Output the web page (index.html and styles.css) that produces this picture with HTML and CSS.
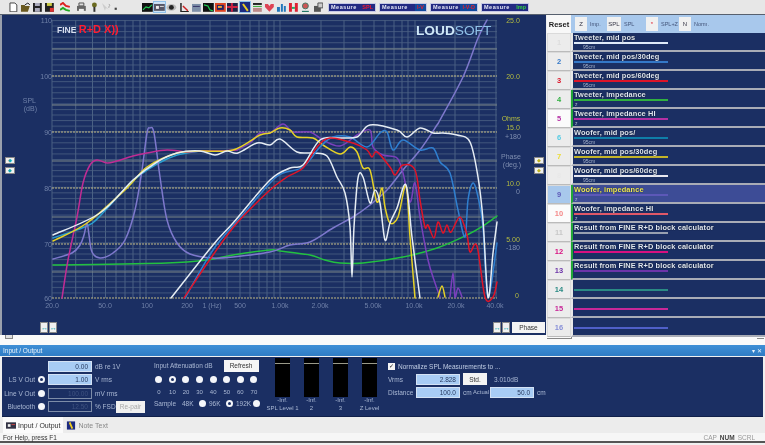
FILE: index.html
```html
<!DOCTYPE html>
<html lang="en">
<head>
<meta charset="utf-8">
<title>FINE R+D X</title>
<link rel="stylesheet" href="styles.css">
</head>
<body>
<header class="toolbar">
  <div class="tools tools-a">
    <svg class="ico" viewBox="0 0 11 11"><path d="M2 1h5l2 2v7H2z" fill="#fff" stroke="#444"/></svg>
    <svg class="ico" viewBox="0 0 11 11"><path d="M1 3h4v1h5l-2 6H1z" fill="#6a5a20"/><path d="M5 3l3-2 2 2" fill="none" stroke="#222"/></svg>
    <svg class="ico" viewBox="0 0 11 11"><path d="M1 1h9v9H1z" fill="#222"/><path d="M3 1h5v3H3zM3 6h5v4H3z" fill="#aab"/></svg>
    <svg class="ico" viewBox="0 0 11 11"><path d="M1 1h9v9H1z" fill="#222"/><path d="M3 1h5v3H3z" fill="#cc4"/><path d="M6 6h4v4H6z" fill="#d33"/></svg>
    <svg class="ico ico-gap" viewBox="0 0 11 11"><path d="M0 3l3-2 3 3 4 1" fill="none" stroke="#d22" stroke-width="2"/><path d="M0 8l3-2 3 2 4 1" fill="none" stroke="#2a2" stroke-width="2"/></svg>
    <svg class="ico ico-gap" viewBox="0 0 11 11"><path d="M3 1h5v3H3z" fill="#ddd" stroke="#555"/><path d="M1 4h9v5H1z" fill="#666"/><path d="M3 7h5v3H3z" fill="#eee"/></svg>
    <svg class="ico" viewBox="0 0 11 11"><circle cx="5.500" cy="3" r="2.500" fill="#6a6a20"/><path d="M5.500 5v5" stroke="#333" stroke-width="2"/></svg>
    <svg class="ico" viewBox="0 0 11 11"><path d="M1 1l3 8 1-3 3 2z" fill="#ccc"/><path d="M8 2q2 1 0 3v1" fill="none" stroke="#aaa"/></svg>
    <svg class="ico ico-tiny" viewBox="0 0 11 11"><path d="M3 6h4v4H3z" fill="#444"/></svg>
  </div>
  <div class="tools tools-b">
    <svg class="ico" viewBox="0 0 11 11"><path d="M0 1h11v9H0z" fill="#111"/><path d="M1 8l3-3 3 1 3-3" fill="none" stroke="#2c5" stroke-width="1.200"/></svg>
    <span class="ico-on"><svg class="ico" viewBox="0 0 11 11"><path d="M0 2h11v7H0z" fill="#556"/><path d="M2 4h3v3H2z" fill="#eee"/><path d="M6 4h4v1H6z" fill="#ddd"/></svg></span>
    <svg class="ico" viewBox="0 0 11 11"><ellipse cx="5.500" cy="5.500" rx="5" ry="3.500" fill="#bbb"/><circle cx="5.500" cy="5.500" r="2.500" fill="#222"/></svg>
    <svg class="ico" viewBox="0 0 11 11"><path d="M2 1v9h8" fill="none" stroke="#222" stroke-width="1.500"/><path d="M4 4l5 5" stroke="#c22" stroke-width="1.500"/></svg>
    <svg class="ico" viewBox="0 0 11 11"><path d="M1 2h9v8H1z" fill="#7e8fa8"/><path d="M2 4h7v1H2z" fill="#336"/></svg>
    <svg class="ico" viewBox="0 0 11 11"><path d="M0 1h11v9H0z" fill="#111"/><path d="M1 3l4 1 2 4 3 1" fill="none" stroke="#2c5" stroke-width="1.200"/></svg>
    <svg class="ico" viewBox="0 0 11 11"><path d="M0 1h11v9H0z" fill="#d42"/><path d="M2 3h7v5H2z" fill="#226"/><path d="M3 4h4v2H3z" fill="#ea3"/></svg>
    <svg class="ico" viewBox="0 0 11 11"><path d="M0 1h11v9H0z" fill="#224"/><path d="M5 1v9M0 5h11" stroke="#c24" stroke-width="2"/></svg>
    <span class="ico-on"><svg class="ico" viewBox="0 0 11 11"><path d="M0 0h11v11H0z" fill="#1c2a80"/><path d="M3 2l5 7" stroke="#ec2" stroke-width="2"/></svg></span>
    <svg class="ico" viewBox="0 0 11 11"><path d="M1 1h9v2H1z" fill="#222"/><path d="M1 4h9v1H1z" fill="#3a3"/><path d="M1 6h9v4H1z" fill="#b88"/></svg>
    <svg class="ico" viewBox="0 0 11 11"><path d="M5.500 10L1 5V2h3l1.500 2L7 2h3v3z" fill="#d45"/></svg>
    <svg class="ico" viewBox="0 0 11 11"><path d="M1 5h3v5H1zM5 2h2v8H5zM8 4h2v6H8z" fill="#27b"/></svg>
    <svg class="ico" viewBox="0 0 11 11"><path d="M1 1h3v9H1zM7 1h3v9H7z" fill="#d23"/><path d="M4 5h3v2H4z" fill="#2a6"/></svg>
    <svg class="ico" viewBox="0 0 11 11"><circle cx="5.500" cy="4" r="3" fill="#c55" stroke="#476"/><path d="M2 10h7" stroke="#276" stroke-width="2"/></svg>
    <svg class="ico" viewBox="0 0 11 11"><path d="M1 4h7v6H1z" fill="#555"/><path d="M5 1h5v5H5z" fill="#ccc" stroke="#555"/></svg>
  </div>
  <div class="measures">
    <span class="measure">Measure<b class="m-red">SPL</b></span>
    <span class="measure">Measure<b class="m-box">I-V</b></span>
    <span class="measure">Measure<b class="m-box">I-V-D</b></span>
    <span class="measure">Measure<b class="m-green">Imp</b></span>
  </div>
</header>

<main class="main">
  <section class="chart">
    <svg class="plot" viewBox="0 15 545 320" width="545" height="320">
      <defs>
        <pattern id="minor" x="0" y="20" width="10" height="5.560" patternUnits="userSpaceOnUse">
          <rect width="10" height="1" fill="#41567c"/>
        </pattern>
      </defs>
      <rect class="grid-h" x="52" y="20" width="445" height="278" fill="url(#minor)"/>
      <path class="grid-v" d="M52 20V298M75.700 20V298M92.500 20V298M105.500 20V298M116 20V298M125 20V298M133 20V298M140 20V298M146 20V298M186 20V298M210 20V298M227 20V298M240 20V298M250 20V298M259 20V298M267 20V298M274 20V298M280 20V298M321 20V298M344 20V298M361 20V298M374 20V298M385 20V298M394 20V298M402 20V298M408 20V298M415 20V298M455 20V298M479 20V298M496 20V298"/>
      <path class="grid-5" d="M52 49H497M52 105H497M52 161H497M52 217H497M52 272H497"/>
      <path class="grid-10" d="M52 76H497M52 132H497M52 188H497M52 244H497M52 298H497"/>

      <polyline class="curve" points="53,238 87,226 100,216 133,181 157,164 177,155 200,151"/>
      <polyline class="curve c-green" points="53,265 167,263 207,260 233,255 270,250 280,251 310,255 325,260 340,263 363,263 403,257 437,248 467,235 483,226 497,216"/>
      <polyline class="curve c-lav" points="53,259 72,253 80,245 84,235 87,223 89,235 92,252 100,258 113,253 125,240 135,210 142,170 147,133 150,128 154,133 160,177 167,220 177,243 190,254 213,258 233,257 270,252 290,245 310,242 333,228 353,217 370,205 387,190 403,170 420,150 437,125 440,120 463,77 478,38 487,20"/>
      <polyline class="curve c-mag" points="62,298 68,260 77,217 83,183 90,165 97,160 107,163 117,161 133,156 147,153 167,150 187,152 200,151 220,151 237,150"/>
      <polyline class="curve c-pur" points="237,150 250,143 260,133 270,133 283,124 293,132 310,132 323,140 340,146 357,135 370,130 373,147 383,155 397,158 403,173 410,202 415,183 420,217 428,260 435,283 440,297"/>
      <polyline class="curve c-pur" points="450,297 453,273 455,297 458,288 462,297"/>
      <polyline class="curve c-yel" points="53,241 87,223 127,188 147,167 177,153 200,151 233,150 260,135 270,133 280,128 290,130 297,137 313,138 323,145 340,154 350,147 357,152 363,168 370,170 377,202 382,188 385,207 390,223 398,217 406,186 410,237 415,298"/>
      <polyline class="curve c-yel" points="438,297 442,286 445,297"/>
      <polyline class="curve c-whi" points="53,235 100,213 133,180 157,162 177,153 200,151 215,155 227,151 238,153 257,143 270,145 280,139 297,152 313,153 327,156 337,177 345,193 350,227 352,277 354,227 358,178 363,177 370,203 375,190 380,203 385,240 390,223 397,208 406,185 412,237 420,298"/>
      <polyline class="curve c-blu" points="185,298 213,250 240,218 270,183 283,173 303,167 320,147 333,137 350,137 367,147 380,133 387,132 393,150 403,140 420,150 433,148 440,162 450,173 458,210 465,237 468,200 473,183 478,197 483,227 488,297 497,243"/>
      <polyline class="curve c-whi" points="171,298 213,245 233,223 270,180 290,168 303,165 320,140 340,138 357,137 370,125 397,130 407,137 420,128 433,133 443,133 457,135 470,142 478,177 483,220 488,297 493,253 497,222"/>
      <polyline class="curve c-red" points="184,298 213,255 237,223 270,190 287,177 303,168 317,147 330,138 353,143 367,150 372,157 377,152 390,167 395,175 403,165 415,170 420,200 425,227 428,225 434,238 438,222 443,233 447,225 451,232 460,217 467,235 470,252 477,246 485,297 493,297 497,282"/>

      <text class="logo-fine" x="57" y="33">FINE <tspan class="logo-rd">R+D X))</tspan></text>
      <text class="logo-soft" x="416" y="35"><tspan class="logo-loud">LOUD</tspan>SOFT</text>

      <g class="ax-l">
        <text x="52" y="23">110</text><text x="52" y="79">100</text><text x="36" y="103">SPL</text><text x="37" y="111">(dB)</text><text x="52" y="135">90</text><text x="52" y="191">80</text><text x="52" y="247">70</text><text x="52" y="301">60</text>
      </g>
      <g class="ax-b">
        <text x="52" y="308">20.0</text><text x="105" y="308">50.0</text><text x="147" y="308">100</text><text x="187" y="308">200</text><text x="212" y="308">1 (Hz)</text><text x="240" y="308">500</text><text x="280" y="308">1.00k</text><text x="320" y="308">2.00k</text><text x="373" y="308">5.00k</text><text x="414" y="308">10.0k</text><text x="456" y="308">20.0k</text><text x="495" y="308">40.0k</text>
      </g>
      <g class="ax-r">
        <text x="513" y="23">25.0</text><text x="513" y="79">20.0</text><text x="511" y="121">Ohms</text><text x="513" y="130">15.0</text><text class="gray" x="513" y="139">+180</text><text class="gray" x="511" y="159">Phase</text><text class="gray" x="512" y="167">(deg.)</text><text x="513" y="186">10.0</text><text class="gray" x="518" y="194">0</text><text x="513" y="242">5.00</text><text class="gray" x="513" y="250">-180</text><text x="517" y="298">0</text>
      </g>
    </svg>
    <button class="nudge n-l1">&#9670;</button>
    <button class="nudge n-l2">&#9670;</button>
    <button class="nudge n-r1 yel">&#9670;</button>
    <button class="nudge n-r2 yel">&#9670;</button>
    <button class="nudge tall n-b1">&#8596;</button>
    <button class="nudge tall n-b2">&#8596;</button>
    <button class="nudge tall n-b3">&#8596;</button>
    <button class="nudge tall n-b4">&#8596;</button>
    <button class="phase">Phase</button>
  </section>

  <aside class="side">
    <div class="side-head">
      <button class="reset">Reset</button>
      <div class="modes">
        <button class="mode m-z">Z</button><span class="mode-l l-z">Imp.</span>
        <button class="mode m-spl">SPL</button><span class="mode-l l-spl">SPL</span>
        <button class="mode m-star">*</button><span class="mode-l l-star">SPL+Z</span>
        <button class="mode m-n">N</button><span class="mode-l">Norm.</span>
      </div>
    </div>
    <ol class="rows">
      <li class="row r1"><span class="num">1</span><div class="trace"><b>Tweeter, mid pos</b><i></i><small>95cm</small></div></li>
      <li class="row r2"><span class="num">2</span><div class="trace"><b>Tweeter, mid pos/30deg</b><i></i><small>95cm</small></div></li>
      <li class="row r3"><span class="num">3</span><div class="trace"><b>Tweeter, mid pos/60deg</b><i></i><small>95cm</small></div></li>
      <li class="row r4 act"><span class="num">4</span><div class="trace"><b>Tweeter, impedance</b><i></i><small class="z">z</small></div></li>
      <li class="row r5 act lit"><span class="num">5</span><div class="trace"><b>Tweeter, impedance HI</b><i></i><small class="z">z</small></div></li>
      <li class="row r6"><span class="num">6</span><div class="trace"><b>Woofer, mid pos/</b><i></i><small>95cm</small></div></li>
      <li class="row r7"><span class="num">7</span><div class="trace"><b>Woofer, mid pos/30deg</b><i></i><small>95cm</small></div></li>
      <li class="row r8"><span class="num">8</span><div class="trace"><b>Woofer, mid pos/60deg</b><i></i><small>95cm</small></div></li>
      <li class="row r9 act sel"><span class="num">9</span><div class="trace"><b>Woofer, impedance</b><i></i><small class="z">z</small></div></li>
      <li class="row r10 act lit"><span class="num">10</span><div class="trace"><b>Woofer, impedance HI</b><i></i><small class="z">z</small></div></li>
      <li class="row r11 act"><span class="num">11</span><div class="trace"><b>Result from FINE R+D block calculator</b><i></i></div></li>
      <li class="row r12 act"><span class="num">12</span><div class="trace"><b>Result from FINE R+D block calculator</b><i></i></div></li>
      <li class="row r13 act"><span class="num">13</span><div class="trace"><b>Result from FINE R+D block calculator</b><i></i></div></li>
      <li class="row r14"><span class="num">14</span><div class="trace"><b>&nbsp;</b><i></i></div></li>
      <li class="row r15"><span class="num">15</span><div class="trace"><b>&nbsp;</b><i></i></div></li>
      <li class="row r16"><span class="num">16</span><div class="trace"><b>&nbsp;</b><i></i></div></li>
    </ol>
  </aside>
</main>

<div class="strip"><span class="grip"></span><span class="grip-b"></span><span class="grip-c"></span></div>

<div class="title-bar"><span>Input / Output</span><span class="title-ctl">&#9662; &#10005;</span></div>

<section class="io">
  <div class="io-a">
    <span></span><span></span><span class="field">0.00</span><span class="unit u-wide">dB re 1V</span>
    <span class="lbl">LS V Out</span><span class="radio on"></span><span class="field">1.00</span><span class="unit u-wide">V rms</span>
    <span class="lbl">Line V Out</span><span class="radio"></span><span class="field off">100.00</span><span class="unit u-wide">mV rms</span>
    <span class="lbl">Bluetooth</span><span class="radio"></span><span class="field off">12.50</span><span class="unit">% FSD</span><button class="repair">Re-pair</button>
  </div>
  <div class="io-b">
    <div class="att-head"><span>Input Attenuation dB</span><button class="refresh">Refresh</button></div>
    <div class="att att-r">
      <span class="radio"></span><span class="radio on"></span><span class="radio"></span><span class="radio"></span><span class="radio"></span><span class="radio"></span><span class="radio"></span><span class="radio"></span>
    </div>
    <div class="att att-n"><span>0</span><span>10</span><span>20</span><span>30</span><span>40</span><span>50</span><span>60</span><span>70</span></div>
    <div class="sample"><span class="s-l">Sample</span><span class="s-k">48K</span><span class="radio"></span><span class="s-k">96K</span><span class="radio on"></span><span class="s-k">192K</span><span class="radio"></span></div>
  </div>
  <div class="io-c">
    <div class="meter"><div class="bar"></div><span>-Inf.</span><span>SPL Level 1</span></div>
    <div class="meter"><div class="bar"></div><span>-Inf.</span><span>2</span></div>
    <div class="meter"><div class="bar"></div><span>-Inf.</span><span>3</span></div>
    <div class="meter"><div class="bar"></div><span>-Inf.</span><span>Z Level</span></div>
  </div>
  <div class="io-d">
    <div class="norm"><span class="check">&#10003;</span><span>Normalize SPL Measurements to ...</span></div>
    <div class="norm-row"><span class="n-l">Vrms</span><span class="field wide">2.828</span><button class="std">Std.</button><span class="db">3.010dB</span></div>
    <div class="norm-row"><span class="n-l">Distance</span><span class="field wide">100.0</span><span class="cm">cm</span><span class="act-l">Actual</span><span class="field wide">50.0</span><span class="cm2">cm</span></div>
  </div>
</section>

<nav class="tabs">
  <span class="tab cur"><svg class="tab-ico" viewBox="0 0 11 9"><path d="M0 1h11v7H0z" fill="#334"/><path d="M2 3h3v3H2z" fill="#eee"/><path d="M6 3h4v1H6z" fill="#c44"/></svg>Input / Output</span>
  <span class="tab"><svg class="tab-ico" viewBox="0 0 11 9"><path d="M1 0h9v9H1z" fill="#1c2a80"/><path d="M4 1l3 7" stroke="#ec2" stroke-width="2"/></svg>Note Text</span>
</nav>

<footer class="status"><span>For Help, press F1</span><span class="locks"><span>CAP</span><b>NUM</b><span>SCRL</span></span></footer>
<script src="chart.js"></script>
</body>
</html>
```
FILE: styles.css
```css
* { box-sizing: border-box; }
html, body { margin: 0; padding: 0; }
body {
  width: 765px; height: 445px; overflow: hidden;
  background: #f0f0f0; color: #222;
  font: 7px "Liberation Sans", Arial, sans-serif;
  filter: blur(.5px);
}
button { font: inherit; padding: 0; margin: 0; border: 0; cursor: default; }

/* toolbar */
.toolbar { height: 15px; display: flex; align-items: center; background: #e7e7e7; border-bottom: 1px solid #57606e; }
.tools { display: flex; align-items: center; gap: 1.300px; }
.tools-a { margin-left: 8px; width: 128px; }
.tools-b { margin-left: 6px; width: 186px; gap: 1.400px; }
.ico { width: 10.800px; height: 10.800px; display: block; flex: none; }
.ico-gap { margin-left: 4px; }
.ico-tiny { width: 6px; }
.ico-on { outline: 1px solid #8fc0ea; background: #cfe4f7; display: block; }
.measures { display: flex; gap: 3px; }
.measure { width: 48px; height: 9px; background: #222a82; border: 1px solid #c4c8e4; color: #e6e8f6; font-size: 5.500px; font-weight: 700; letter-spacing: .5px; line-height: 7px; padding-left: 2px; white-space: nowrap; display: flex; justify-content: space-between; }
.measure b { padding: 0 2px; letter-spacing: 0; }
.m-red { color: #f01830; }
.m-box { color: #e02030; background: #104a9c; }
.m-green { color: #30d040; }

/* main */
.main { height: 320px; display: flex; }
.chart { width: 546px; position: relative; background: #1b2f63; border-left: 2px solid #9aa0ac; overflow: hidden; }
.plot { display: block; margin-left: -2px; }
.grid-v { stroke: #4a6184; stroke-width: 1; fill: none; }
.grid-5 { stroke: #7a8688; stroke-width: 1; fill: none; }
.grid-10 { stroke: #c0b884; stroke-width: 1; stroke-dasharray: 2 1; fill: none; }
.curve { fill: none; stroke: #2a9fd0; stroke-width: 1.500; stroke-linejoin: round; stroke-linecap: round; }
.c-green { stroke: #22c040; }
.c-lav { stroke: #7d78cc; }
.c-mag { stroke: #c02c94; }
.c-pur { stroke: #7a40bc; }
.c-yel { stroke: #e6d226; }
.c-whi { stroke: #e6edf4; }
.c-blu { stroke: #2f7fd0; }
.c-red { stroke: #e01428; }
.logo-fine { font: 700 8.500px "Liberation Sans", Arial, sans-serif; fill: #d8dff0; }
.logo-rd { fill: #ff1c30; font-size: 11px; }
.logo-soft { font: 400 13.700px "Liberation Sans", Arial, sans-serif; fill: #8fc0e8; }
.logo-loud { font-weight: 700; fill: #cfe8f8; }
.ax-l text, .ax-b text { font-size: 7px; fill: #6f80a8; }
.ax-l text { text-anchor: end; }
.ax-b text { text-anchor: middle; }
.ax-r text { font-size: 7px; fill: #b4bc40; text-anchor: middle; }
.ax-r .gray { fill: #7f8eb0; }

.nudge { position: absolute; width: 10px; height: 7px; background: #f0f0f0; color: #18a8b0; border: 1px solid #888; font-size: 5px; line-height: 5px; text-align: center; }
.nudge.yel { color: #c0b420; }
.nudge.tall { width: 8px; height: 11px; line-height: 9px; font-size: 7px; }
.n-l1 { left: 3px; top: 142px; }
.n-l2 { left: 3px; top: 152px; }
.n-r1 { left: 532px; top: 142px; }
.n-r2 { left: 532px; top: 152px; }
.n-b1 { left: 38px; top: 307px; }
.n-b2 { left: 47px; top: 307px; }
.n-b3 { left: 491px; top: 307px; }
.n-b4 { left: 500px; top: 307px; }
.phase { position: absolute; left: 510px; top: 307px; width: 33px; height: 11px; background: #f4f4f4; color: #333; font-size: 6.500px; }

/* side panel */
.side { flex: 1; display: flex; flex-direction: column; background: #f0f0f0; padding-left: 1px; }
.side-head { height: 19px; display: flex; }
.reset { width: 24px; height: 18px; background: #f8f8f8; font-weight: 700; font-size: 7.500px; color: #222; }
.modes { flex: 1; background: #a8c8ec; display: flex; align-items: center; padding-left: 4px; color: #44557a; font-size: 5.500px; }
.mode { width: 12px; height: 14px; background: #f0f0f0; color: #334; font-size: 6px; margin-right: 3px; }
.m-star { color: #e02030; }
.l-z { width: 17px; }
.l-spl { width: 22px; }
.l-star { width: 18px; }
.m-spl { width: 14px; }
.rows { list-style: none; margin: 0; padding: 0; flex: 1; display: grid; grid-template-rows: repeat(16, 1fr); }
.row { display: flex; }
.num { width: 24px; background: #ececec; border: 1px solid #dadada; border-bottom-color: #bbb; text-align: center; font-weight: 700; font-size: 7.500px; line-height: 17px; color: var(--c); flex: none; }
.trace { flex: 1; background: #1b2f63; border-bottom: 2px solid #a9acb6; border-left: 2px solid #e8e8e8; padding: 1px 0 0 1px; position: relative; overflow: hidden; color: #dfe7f4; }
.trace b { display: block; font-size: 7.400px; line-height: 8px; letter-spacing: .12px; white-space: nowrap; text-shadow: 0 0 1px #000; }
.trace i { display: block; width: 94px; height: 1.500px; background: var(--c); }
.trace small { display: block; font-size: 5px; line-height: 6px; margin-top: .5px; padding-left: 9px; color: #a8b4cc; }
.trace small.z { padding-left: 1px; }
.act .trace { border-left-color: #22a838; }
.lit .num { background: #fbfbfb; }
.sel .num { background: #a8c8ec; }
.sel .trace { background: #3d4c96; color: #f0ea60; }
.r1 { --c: #dfeaf8; }
.r2 { --c: #3478c8; }
.r3 { --c: #dc1428; }
.r4 { --c: #30b040; }
.r5 { --c: #b430a4; }
.r6 { --c: #0f7ea8; }
.r7 { --c: #c4b428; }
.r8 { --c: #e8e8f0; }
.r9 { --c: #5c58b8; }
.r10 { --c: #e05868; }
.r11 { --c: #98a0b0; }
.r12 { --c: #d81080; }
.r13 { --c: #6c34a8; }
.r14 { --c: #2a8a84; }
.r15 { --c: #c82898; }
.r16 { --c: #5060c8; }
.r1 .num { color: #ddd; }
.r6 .num { color: #58cce4; }
.r7 .num { color: #ecdc30; }
.r8 .num { color: #e8e8e8; }
.r10 .num { color: #f48888; }
.r11 .num { color: #c8c8c8; }
.r16 .num { color: #8890d8; }

/* strip and title */
.strip { height: 10px; background: #fafafa; display: flex; padding-left: 5px; }
.grip { width: 8px; height: 4px; background: #e0e0e0; border: 1px solid #888; border-top: 0; }
.grip-b { width: 25px; height: 4px; margin-left: 534px; border-bottom: 1px solid #888; border-right: 1px solid #888; }
.grip-c { width: 7px; height: 4px; margin-left: 185px; border-bottom: 1px solid #888; }
.title-bar { height: 11px; display: flex; justify-content: space-between; align-items: center; padding: 0 3px; background: linear-gradient(#3f8fd6, #2f7cc4); color: #eaf3fb; font-size: 6.500px; }
.title-ctl { font-size: 5.500px; }

/* input output */
.io { height: 60px; margin: 1px 2px 0; background: #1b2f63; display: flex; color: #aab8d4; font-size: 6.500px; border-bottom: 1px solid #10204a; }
.io-a { width: 152px; display: grid; grid-template-columns: 33px 7px 44px 20px 29px; column-gap: 3px; grid-template-rows: repeat(4, 13.300px); align-items: center; padding-top: 3px; }
.lbl { text-align: right; white-space: nowrap; }
.radio { width: 7px; height: 7px; border-radius: 50%; background: #f4f6fa; display: block; position: relative; flex: none; }
.radio.on::after { content: ""; position: absolute; left: 2px; top: 2px; width: 3px; height: 3px; border-radius: 50%; background: #1b2f63; }
.field { height: 11px; background: #a8ccf4; color: #26395f; text-align: right; padding-right: 3px; line-height: 9px; border: 1px solid #d4e2f4; }
.field.off { background: #1b2f63; color: #3f5280; border-color: #7d8ca8; }
.unit { white-space: nowrap; }
.u-wide { grid-column: span 2; }
.repair { height: 12px; background: #f0f0f0; color: #a8a8a8; margin-left: -2px; width: 29px; font-size: 6.500px; }
.io-b { width: 114px; padding-top: 3px; }
.att-head { height: 11px; display: flex; align-items: center; gap: 11px; white-space: nowrap; }
.refresh { width: 35px; height: 12px; flex: none; background: #f6f6f6; color: #333; font-size: 6.500px; }
.att { display: grid; grid-template-columns: repeat(8, 13.600px); justify-items: center; width: 109px; margin-left: -2px; }
.att-r { margin-top: 5px; height: 7px; }
.att-n { margin-top: 5px; height: 8px; line-height: 8px; font-size: 6px; }
.sample { display: flex; align-items: center; margin-top: 3px; height: 9px; }
.s-l { width: 28px; }
.s-k { width: 17px; white-space: nowrap; }
.sample .radio { margin-right: 3px; }
.io-c { width: 120px; display: flex; padding-top: 1px; }
.meter { width: 29px; display: flex; flex-direction: column; align-items: center; line-height: 7.500px; font-size: 6px; white-space: nowrap; }
.bar { width: 15px; height: 39px; background: #000; position: relative; }
.bar::after { content: ""; position: absolute; left: 0; right: 0; top: 5px; height: 1px; background: #9a9a8a; }
.io-d { flex: 1; padding-top: 5px; }
.norm { display: flex; align-items: center; gap: 3px; height: 9px; white-space: nowrap; color: #c0cde4; }
.check { width: 7px; height: 7px; background: #f4f4f4; color: #111; font-size: 6px; line-height: 7px; text-align: center; }
.norm-row { display: flex; align-items: center; height: 13px; margin-top: 1.500px; }
.norm-row + .norm-row { margin-top: 0; }
.n-l { width: 28px; }
.field.wide { width: 44px; flex: none; }
.std { width: 24px; height: 12px; margin-left: 3px; background: #f4f4f4; color: #333; font-size: 6.500px; }
.db { margin-left: 7px; }
.cm { margin-left: 3px; width: 10px; }
.act-l { width: 17px; flex: none; font-size: 5.800px; white-space: nowrap; }
.cm2 { margin-left: 3px; }

/* tabs and status */
.tabs { height: 16px; display: flex; background: #ececec; padding-left: 3px; font-size: 7px; white-space: nowrap; }
.tab { display: flex; align-items: center; gap: 2px; padding: 0 3px; color: #888; }
.tab.cur { background: #fbfbfb; color: #333; }
.tab-ico { width: 10px; height: 9px; flex: none; }
.status { height: 10px; display: flex; justify-content: space-between; align-items: center; padding: 0 10px 0 3px; background: #f6f6f6; border-bottom: 2px solid #555; color: #333; font-size: 6.500px; }
.locks { display: flex; gap: 3px; color: #999; }
.locks b { color: #444; }
```
FILE: chart.js
```js
// Turn each measured trace (a polyline of points) into a smooth curve.
document.querySelectorAll('polyline.curve').forEach(function (line) {
  var p = line.getAttribute('points').trim().split(/\s+/).map(function (s) {
    return s.split(',').map(Number);
  });
  var d = 'M' + p[0][0] + ' ' + p[0][1];
  for (var i = 0; i < p.length - 1; i++) {
    var a = p[Math.max(i - 1, 0)], b = p[i], c = p[i + 1], e = p[Math.min(i + 2, p.length - 1)];
    var k = 1 / 6;
    d += 'C' + (b[0] + (c[0] - a[0]) * k) + ' ' + (b[1] + (c[1] - a[1]) * k) + ' ' +
      (c[0] - (e[0] - b[0]) * k) + ' ' + (c[1] - (e[1] - b[1]) * k) + ' ' + c[0] + ' ' + c[1];
  }
  var path = document.createElementNS('http://www.w3.org/2000/svg', 'path');
  path.setAttribute('class', line.getAttribute('class'));
  path.setAttribute('d', d);
  line.replaceWith(path);
});
```
